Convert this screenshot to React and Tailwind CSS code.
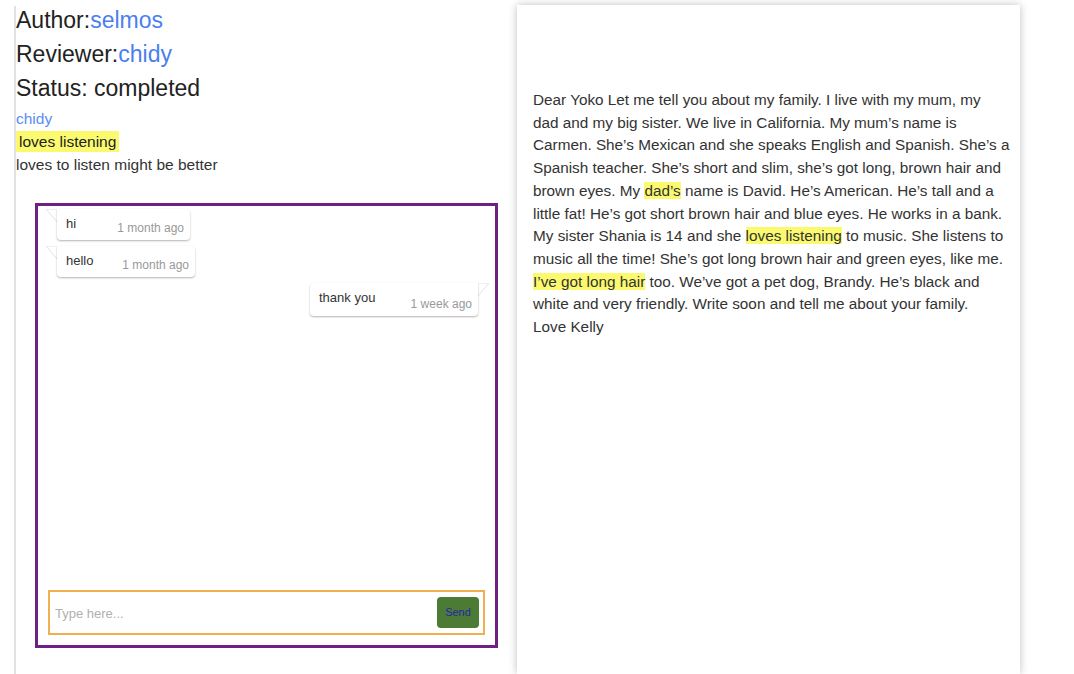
import React from 'react';

const messages = [
    { id: 1, text: 'hi', time: '1 month ago', mine: false, width: 'w-[133px]' },
    { id: 2, text: 'hello', time: '1 month ago', mine: false, width: 'w-[138px]' },
    { id: 3, text: 'thank you', time: '1 week ago', mine: true, width: 'w-[168px]' },
];

// Speech bubble with a little triangle tail at the top corner.
const Bubble = ({ text, time, mine, width }) => {
    return (
        <div className={`flex ${mine ? 'justify-end pr-[17px]' : 'justify-start pl-[19px]'}`}>
            <div className="relative">
                <svg
                    className={`absolute top-0 ${mine ? 'right-[-12px]' : 'left-[-12px]'}`}
                    width="13"
                    height="15"
                    viewBox="0 0 13 15"
                >
                    {mine ? (
                        <path d="M0 0 L12 0 L0 14 Z" fill="#fff" stroke="#e2e2e2" strokeWidth="1" />
                    ) : (
                        <path d="M13 0 L1 0 L13 14 Z" fill="#fff" stroke="#e2e2e2" strokeWidth="1" />
                    )}
                </svg>
                <div
                    className={`relative flex items-end justify-between bg-white pl-[9px] pr-[6px] shadow-[0_1px_2px_rgba(0,0,0,0.3)] ${width} ${mine ? 'h-[33px] rounded-l-[4px] rounded-br-[4px]' : 'h-[31px] rounded-r-[4px] rounded-bl-[4px]'}`}
                >
                    <span className="self-start pt-[5px] text-[13px] text-[#333]">{text}</span>
                    <span className="pb-[3px] text-[12px] text-[#999]">{time}</span>
                </div>
            </div>
        </div>
    );
};

const ChatBox = () => {
    return (
        <div className="ml-[19px] mt-[27px] flex h-[445px] w-[463px] flex-col border-[3px] border-[#6e2182] bg-white">
            <div className="flex flex-1 flex-col gap-[6px] pt-[3px]">
                {messages.map((m) => (
                    <Bubble key={m.id} {...m} />
                ))}
            </div>
            <div className="mx-[10px] mb-[10px] flex h-[45px] items-center border-2 border-[#f0b04e] pl-[5px] pr-[4px]">
                <input
                    className="mt-[3px] flex-1 bg-transparent text-[13px] text-[#333] outline-none placeholder:text-[#b0b0b0]"
                    placeholder="Type here..."
                />
                <button className="h-[31px] w-[42px] rounded-[4px] bg-[#4b7b34] text-[11px] text-[#2626a8]">
                    Send
                </button>
            </div>
        </div>
    );
};

const Mark = ({ children }) => <span className="bg-[#fbfa6e]">{children}</span>;

// Lines broken where the original letter wraps.
const letter = [
    <>Dear Yoko Let me tell you about my family. I live with my mum, my</>,
    <>dad and my big sister. We live in California. My mum’s name is</>,
    <>Carmen. She’s Mexican and she speaks English and Spanish. She’s a</>,
    <>Spanish teacher. She’s short and slim, she’s got long, brown hair and</>,
    <>brown eyes. My <Mark>dad’s</Mark> name is David. He’s American. He’s tall and a</>,
    <>little fat! He’s got short brown hair and blue eyes. He works in a bank.</>,
    <>My sister Shania is 14 and she <Mark>loves listening</Mark> to music. She listens to</>,
    <>music all the time! She’s got long brown hair and green eyes, like me.</>,
    <><Mark>I’ve got long hair</Mark> too. We’ve got a pet dog, Brandy. He’s black and</>,
    <>white and very friendly. Write soon and tell me about your family.</>,
    <>Love Kelly</>,
];

export default function App() {
    return (
        <div className="flex h-[674px] w-[1074px] overflow-hidden bg-white font-['Liberation_Sans',Arial,sans-serif] text-[#222]">
            <div className="ml-[14px] mt-[6px] w-[489px] border-l-2 border-[#e2e2e2]">
                <div className="-mt-[3px]">
                    <div className="text-[23px] leading-[34px]">
                        Author:<span className="text-[#4a80ee]">selmos</span>
                    </div>
                    <div className="text-[23px] leading-[34px]">
                        Reviewer:<span className="text-[#4a80ee]">chidy</span>
                    </div>
                    <div className="text-[23px] leading-[34px]">Status: completed</div>
                    <div className="mt-[2px] text-[15.5px] leading-[23px] text-[#5b8ef0]">chidy</div>
                    <div className="text-[15.5px] leading-[23px]">
                        <span className="bg-[#fbfa6e] px-[3px] py-[2px]">loves listening</span>
                    </div>
                    <div className="text-[15.5px] leading-[23px] text-[#333]">loves to listen might be better</div>
                </div>
                <ChatBox />
            </div>
            <div className="ml-[14px] mt-[5px] w-[503px] bg-white px-[16px] pt-[84px] shadow-[0_0_8px_rgba(0,0,0,0.25)]">
                <div className="text-[15.3px] leading-[22.7px] text-[#333]">
                    {letter.map((line, i) => (
                        <div key={i} className="whitespace-nowrap">
                            {line}
                        </div>
                    ))}
                </div>
            </div>
        </div>
    );
}
